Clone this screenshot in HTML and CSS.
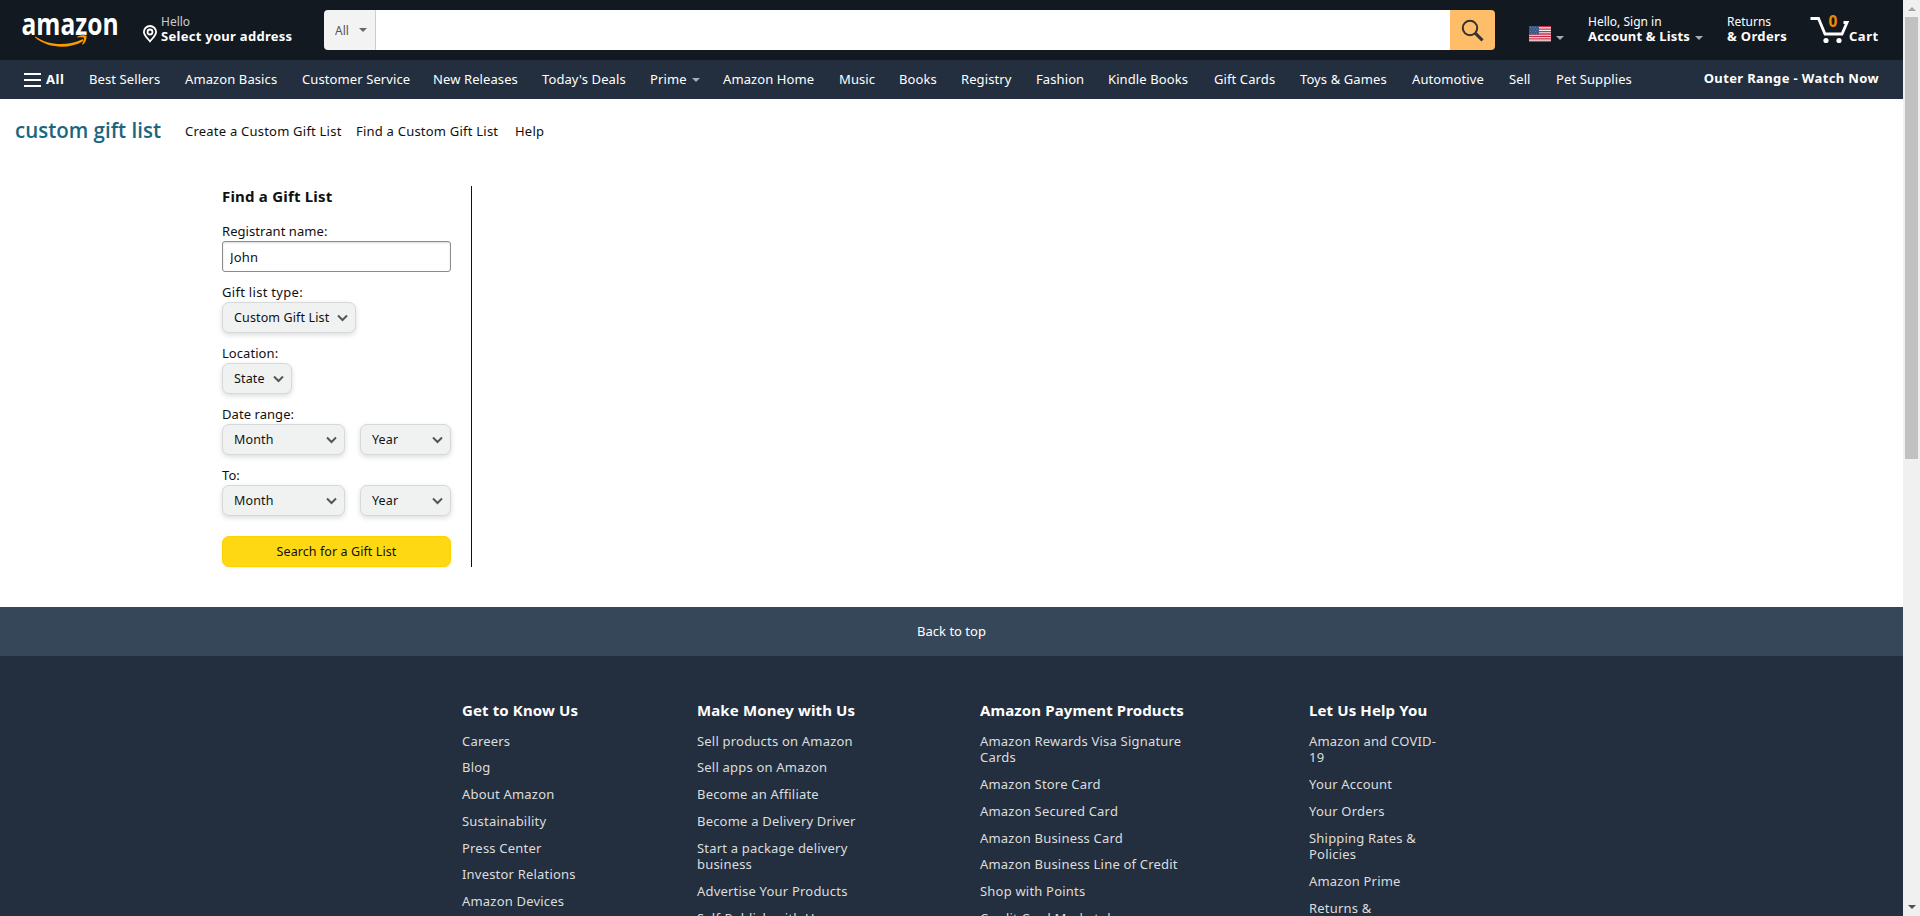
FILE: index.html
```html
<!DOCTYPE html>
<html lang="en">
<head>
<meta charset="utf-8">
<title>Custom Gift List</title>
<link rel="stylesheet" href="styles.css">
</head>
<body>
<div class="window">
<div class="page">
  <header class="topbar">
    <svg class="logo" width="100" height="46" viewBox="20 4 100 46">
      <text class="logo-text" x="21.500" y="35" textLength="97" lengthAdjust="spacingAndGlyphs">amazon</text>
      <path d="M35.500 36.500 C48 45.500 67 46.500 82 39.500 C83.500 39 84.500 40 83 41.200 C69 49.500 48 48.500 35 37.500 Z" fill="#ff9900"/>
      <path d="M77 36.800 C80 34.700 85.500 34.800 86.500 36 C87 38.500 85.500 42.500 83 44.500 C82.300 44.900 82 44.500 82.300 43.800 C83.300 41.300 84.500 38.800 83.800 37.900 C83 37.100 80.300 37.300 77.500 37.600 Z" fill="#ff9900" stroke="#131921" stroke-width="1" paint-order="stroke"/>
    </svg>
    <div class="deliver">
      <svg class="pin" width="16" height="18" viewBox="0 0 16 18" fill="none" stroke="#fff" stroke-width="1.800"><path d="M8 16.300 C5 13 1.900 10 1.900 7 A6.100 6 0 0 1 14.100 7 C14.100 10 11 13 8 16.300Z"/><circle cx="8" cy="7" r="2.500"/></svg>
      <div class="two-line deliver-text"><span class="dim">Hello</span><b>Select your address</b></div>
    </div>
    <div class="search">
      <div class="scope">All<i class="caret dark"></i></div>
      <div class="query"></div>
      <div class="go"><svg width="45" height="40" viewBox="0 0 45 40" fill="none" stroke="#333"><circle cx="20" cy="18" r="7.200" stroke-width="2"/><path d="M25.200 23.200 L32.500 30.300" stroke-width="3"/></svg></div>
    </div>
    <div class="flag">
      <svg width="22" height="16" viewBox="0 0 22 16"><path fill="#f3eef0" d="M0 0h22v16H0z"/><path stroke="#c8304a" stroke-width="1.300" d="M0 .6h22M0 3.100h22M0 5.600h22M0 8h22M0 10.500h22M0 12.900h22M0 15.400h22"/><path fill="#3d5685" d="M0 0h10v8.500H0z"/><path stroke="#7386aa" stroke-width=".8" stroke-dasharray="1 1.500" d="M1 1.500h8M2 3.500h8M1 5.500h8M2 7.300h8"/></svg>
      <i class="caret"></i>
    </div>
    <div class="two-line account"><span>Hello, Sign in</span><b>Account &amp; Lists<i class="caret"></i></b></div>
    <div class="two-line orders"><span>Returns</span><b>&amp; Orders</b></div>
    <div class="cart">
      <svg width="39" height="30" viewBox="0 0 39 30"><path d="M.5 3.500H8.500L15 19H32L37 7.500H33.500" fill="none" stroke="#fff" stroke-width="2.800"/><circle cx="16" cy="25.500" r="2.600" fill="#fff"/><circle cx="29" cy="25.500" r="2.600" fill="#fff"/><text class="cart-count" x="23" y="12" text-anchor="middle">0</text></svg>
      <b>Cart</b>
    </div>
  </header>
  <nav class="mainnav">
    <div class="links">
      <b class="all"><i class="burger"></i>All</b>
      <span>Best Sellers</span><span>Amazon Basics</span><span>Customer Service</span><span>New Releases</span><span>Today's Deals</span><span>Prime<i class="caret"></i></span><span>Amazon Home</span><span>Music</span><span>Books</span><span>Registry</span><span>Fashion</span><span>Kindle Books</span><span>Gift Cards</span><span>Toys &amp; Games</span><span>Automotive</span><span>Sell</span><span>Pet Supplies</span>
    </div>
    <b class="promo">Outer Range - Watch Now</b>
  </nav>
  <nav class="subnav">
    <svg class="brand" width="148" height="40" viewBox="0 -5 148 40"><text class="brand-text" x="0" y="20.500" textLength="146" lengthAdjust="spacingAndGlyphs">custom gift list</text></svg>
    <span class="s1">Create a Custom Gift List</span><span class="s2">Find a Custom Gift List</span><span class="s3">Help</span>
  </nav>
  <main class="main">
    <form class="finder">
      <h1>Find a Gift List</h1>
      <div class="field"><label>Registrant name:</label><input class="text" type="text" value="John"></div>
      <div class="field"><label class="wide">Gift list type:</label><div class="row"><span class="select type">Custom Gift List<svg class="chev" viewBox="0 0 11 8"><path d="M1 1.500 5.500 6 10 1.500"/></svg></span></div></div>
      <div class="field"><label>Location:</label><div class="row"><span class="select state">State<svg class="chev" viewBox="0 0 11 8"><path d="M1 1.500 5.500 6 10 1.500"/></svg></span></div></div>
      <div class="field"><label>Date range:</label><div class="row"><span class="select month">Month<svg class="chev" viewBox="0 0 11 8"><path d="M1 1.500 5.500 6 10 1.500"/></svg></span><span class="select year">Year<svg class="chev" viewBox="0 0 11 8"><path d="M1 1.500 5.500 6 10 1.500"/></svg></span></div></div>
      <div class="field"><label>To:</label><div class="row"><span class="select month">Month<svg class="chev" viewBox="0 0 11 8"><path d="M1 1.500 5.500 6 10 1.500"/></svg></span><span class="select year">Year<svg class="chev" viewBox="0 0 11 8"><path d="M1 1.500 5.500 6 10 1.500"/></svg></span></div></div>
      <button class="submit" type="button">Search for a Gift List</button>
    </form>
  </main>
  <div class="back">Back to top</div>
  <footer class="footer">
    <section><h2>Get to Know Us</h2><ul><li>Careers</li><li>Blog</li><li>About Amazon</li><li>Sustainability</li><li>Press Center</li><li>Investor Relations</li><li>Amazon Devices</li></ul></section>
    <section><h2>Make Money with Us</h2><ul><li>Sell products on Amazon</li><li>Sell apps on Amazon</li><li>Become an Affiliate</li><li>Become a Delivery Driver</li><li>Start a package delivery<br>business</li><li>Advertise Your Products</li><li>Self-Publish with Us</li></ul></section>
    <section><h2>Amazon Payment Products</h2><ul><li>Amazon Rewards Visa Signature<br>Cards</li><li>Amazon Store Card</li><li>Amazon Secured Card</li><li>Amazon Business Card</li><li>Amazon Business Line of Credit</li><li>Shop with Points</li><li>Credit Card Marketplace</li></ul></section>
    <section><h2>Let Us Help You</h2><ul><li>Amazon and COVID-<br>19</li><li>Your Account</li><li>Your Orders</li><li>Shipping Rates &amp;<br>Policies</li><li>Amazon Prime</li><li>Returns &amp;</li></ul></section>
  </footer>
</div>
<div class="scrollbar"><i class="up"></i><div class="thumb"></div><i class="down"></i></div>
</div>
</body>
</html>
```
FILE: styles.css
```css
* { box-sizing: border-box; }
body { margin: 0; background: #fff; color: #0f1111; font: 13px/17px "Noto Sans", "Open Sans", sans-serif; overflow: hidden; }
.window { display: flex; height: 916px; overflow: hidden; }
.page { width: 1903px; height: 916px; overflow: hidden; display: flex; flex-direction: column; white-space: nowrap; }
h1, h2, ul { margin: 0; padding: 0; list-style: none; }

.caret { display: inline-block; border: 4px solid transparent; border-top-color: #a7acb2; border-bottom: 0; }
.caret.dark { border-top-color: #666; }

.topbar { height: 60px; flex: none; background: #131921; color: #fff; display: flex; padding-left: 20px; }
.logo { margin-top: 4px; overflow: visible; }
.logo-text { font: bold 30px "Open Sans", sans-serif; fill: #fff; }
.deliver { display: flex; margin-left: 22px; width: 182px; }
.pin { margin: 25px 3px 0 0; }
.two-line { display: flex; flex-direction: column; padding-top: 15px; font-size: 12px; line-height: 14px; }
.two-line b { font-size: 13px; line-height: 14px; }
.dim { color: #ccc; }
.deliver-text b { letter-spacing: 0.28px; }
.search { display: flex; width: 1171px; height: 40px; margin-top: 10px; border-radius: 4px; overflow: hidden; }
.scope { width: 52px; background: #f3f3f3; border-right: 1px solid #cdcdcd; color: #555; font-size: 12px; display: flex; align-items: center; gap: 10px; padding-left: 11px; }
.query { flex: 1; background: #fff; }
.go { width: 45px; background: #febd69; }
.flag { display: flex; margin-left: 34px; width: 59px; padding-top: 26px; gap: 5px; }
.flag .caret { margin-top: 10px; }
.account { width: 139px; }
.account b { letter-spacing: 0.17px; }
.account .caret { margin-left: 5px; vertical-align: 1px; }
.orders { width: 83px; }
.orders b { letter-spacing: 0.35px; }
.cart { display: flex; padding-top: 15px; }
.cart b { padding-top: 13px; line-height: 16px; letter-spacing: 0.5px; }
.cart-count { font: bold 15.500px "Noto Sans", sans-serif; fill: #f08804; }

.mainnav { height: 39px; flex: none; background: #232f3e; color: #fff; display: flex; justify-content: space-between; align-items: center; padding: 0 24px; }
.links { display: grid; grid-template-columns: 65px 96px 117px 131px 109px 108px 73px 116px 60px 62px 75px 72px 106px 86px 112px 97px 47px 80px; line-height: 39px; letter-spacing: 0.1px; }
.links .caret { margin-left: 5px; vertical-align: 2px; }
.all { display: flex; align-items: center; gap: 5px; letter-spacing: 0.6px; }
.burger { width: 17px; height: 14px; border-top: 2px solid #fff; border-bottom: 2px solid #fff; background: linear-gradient(#fff, #fff) center / 17px 2px no-repeat; }
.promo { padding-bottom: 2px; letter-spacing: 0.37px; }

.subnav { height: 65px; flex: none; display: flex; align-items: center; padding-left: 15px; letter-spacing: 0.22px; }
.brand { overflow: visible; }
.brand-text { font: 600 21px "Open Sans", sans-serif; fill: #1b6680; letter-spacing: 0; }
.s1 { margin-left: 22px; width: 171px; }
.s2 { width: 159px; }

.main { height: 443px; flex: none; padding: 22px 0 0 222px; }
.finder { width: 250px; height: 381px; border-right: 1px solid #0f1111; }
.finder h1 { font-size: 15px; line-height: 20px; height: 35px; letter-spacing: 0.2px; }
.field { width: 229px; margin-bottom: 10px; }
.field label { display: block; line-height: 20px; letter-spacing: 0.06px; }
.field .wide { letter-spacing: 0.3px; }
.text { display: block; width: 229px; height: 31px; border: 1px solid #888c8c; border-radius: 3px; padding: 0 7px; font: inherit; letter-spacing: 0.2px; color: #0f1111; outline: 0; box-shadow: 0 1px 0 rgba(255,255,255,.5), inset 0 1px 2px rgba(15,17,17,.15); }
.row { display: flex; justify-content: space-between; }
.select { height: 31px; display: flex; align-items: center; justify-content: space-between; background: #f0f2f2; border: 1px solid #d5d9d9; border-radius: 7px; padding: 0 7px 0 11px; font-size: 12.500px; letter-spacing: 0.13px; box-shadow: 0 2px 5px rgba(15,17,17,.15); }
.type { width: 134px; }
.state { width: 70px; }
.month { width: 123px; }
.year { width: 91px; }
.chev { width: 11px; height: 8px; fill: none; stroke: #555; stroke-width: 2; }
.submit { display: block; margin-top: 20px; width: 229px; height: 31px; border: 1px solid #fcd200; border-radius: 7px; background: #ffd814; font: inherit; font-size: 12.500px; letter-spacing: 0.08px; color: #0f1111; padding: 0; box-shadow: 0 1px 3px rgba(213,217,217,.5); }

.back { height: 49px; flex: none; background: #37475a; color: #fff; text-align: center; line-height: 49px; }
.footer { flex: 1; background: #232f3e; color: #ddd; padding: 43px 0 0 462px; display: grid; grid-template-columns: 235px 283px 329px 200px; overflow: hidden; }
.footer h2 { color: #fff; font-size: 15px; line-height: 22px; height: 33.500px; letter-spacing: 0.12px; }
.footer li { line-height: 16.800px; margin-bottom: 10px; letter-spacing: 0.2px; }

.scrollbar { width: 17px; height: 916px; background: #f0f0f0; display: flex; flex-direction: column; align-items: center; }
.thumb { width: 13px; height: 442px; background: #c1c1c1; margin-top: 6px; }
.up { margin-top: 7px; border: 4px solid transparent; border-top: 0; border-bottom-color: #a3a3a3; }
.down { margin: auto 0 7px; border: 4px solid transparent; border-bottom: 0; border-top-color: #505050; }
```
